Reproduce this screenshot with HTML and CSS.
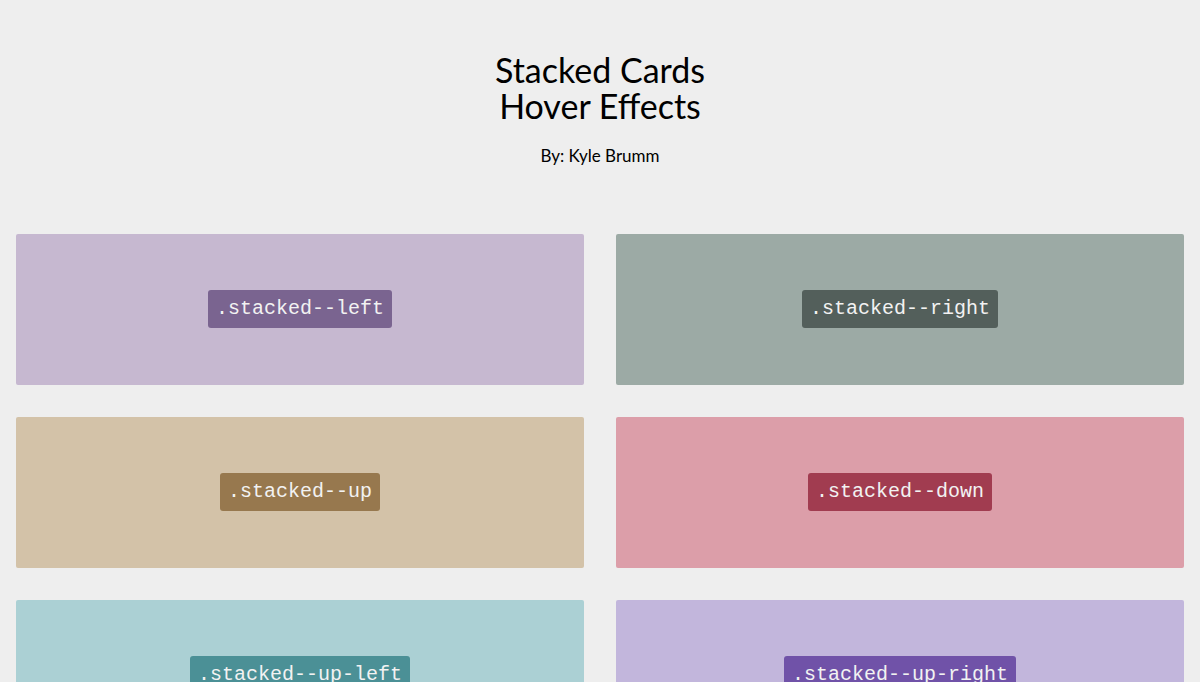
FILE: index.html
```html
<!DOCTYPE html>
<html lang="en">
<head>
  <meta charset="UTF-8">
  <title>Stacked Cards Hover Effects</title>
  <link rel="stylesheet" href="styles.css">
</head>
<body>
  <header class="header">
    <h1>Stacked Cards<br>Hover Effects</h1>
    <p class="byline">By: Kyle Brumm</p>
  </header>

  <main class="cards">
    <div class="card card--left"><span class="tag">.stacked--left</span></div>
    <div class="card card--right"><span class="tag">.stacked--right</span></div>
    <div class="card card--up"><span class="tag">.stacked--up</span></div>
    <div class="card card--down"><span class="tag">.stacked--down</span></div>
    <div class="card card--up-left"><span class="tag">.stacked--up-left</span></div>
    <div class="card card--up-right"><span class="tag">.stacked--up-right</span></div>
  </main>
</body>
</html>
```

FILE: styles.css
```css
body {
  margin: 0;
  background: #eeeeee;
  color: #000;
  font-family: 'Lato', sans-serif;
}

.header {
  text-align: center;
  padding-top: 52px;
}

.header h1 {
  margin: 0;
  font-size: 34px;
  font-weight: 400;
  line-height: 36px;
}

.byline {
  margin: 21px 0 0;
  font-size: 17px;
}

.cards {
  display: grid;
  grid-template-columns: 1fr 1fr;
  column-gap: 32px;
  row-gap: 32px;
  padding: 68px 16px 40px;
}

.card {
  height: 151px;
  display: flex;
  align-items: center;
  justify-content: center;
  border-radius: 2px;
}

.tag {
  font-family: 'Liberation Mono', monospace;
  font-size: 20px;
  line-height: 22px;
  padding: 8px;
  margin-top: -1px;
  border-radius: 3px;
  color: #f2f2f2;
}

.card--left { background: #c6b8d0; }
.card--left .tag { background: #7a6490; }

.card--right { background: #9caaa5; }
.card--right .tag { background: #535f5b; }

.card--up { background: #d3c2a8; }
.card--up .tag { background: #97784e; }

.card--down { background: #dc9ea9; }
.card--down .tag { background: #a13c50; }

.card--up-left { background: #abd0d4; }
.card--up-left .tag { background: #4b9096; }

.card--up-right { background: #c2b6dc; }
.card--up-right .tag { background: #7052a8; }
```
